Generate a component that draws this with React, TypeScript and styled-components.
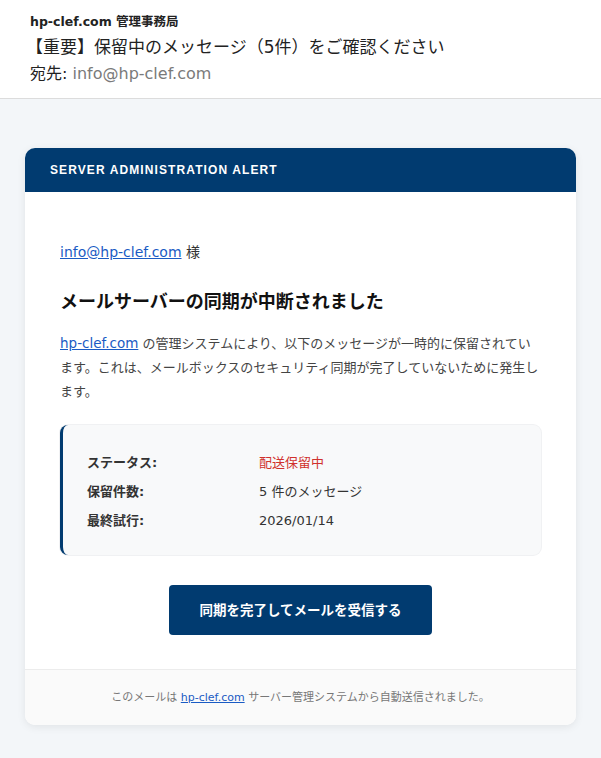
import React from 'react';
import styled, { createGlobalStyle } from 'styled-components';

const GlobalStyle = createGlobalStyle`
  html, body {
    margin: 0;
    padding: 0;
    background: #f3f6f9;
  }
  body {
    font-family: "DejaVu Sans", "Noto Sans CJK JP", sans-serif;
    color: #222;
  }
`;

const detailRows = [
  { label: 'ステータス:', value: '配送保留中', alert: true },
  { label: '保留件数:', value: '5 件のメッセージ', alert: false },
  { label: '最終試行:', value: '2026/01/14', alert: false },
];

export default function App(): JSX.Element {
  return (
    <>
      <GlobalStyle />
      <MailHeader>
        <Sender>hp-clef.com 管理事務局</Sender>
        <Subject>【重要】保留中のメッセージ（5件）をご確認ください</Subject>
        <Recipient>
          宛先: <Address>info@hp-clef.com</Address>
        </Recipient>
      </MailHeader>
      <MailBody>
        <Card>
          <CardHeader>SERVER ADMINISTRATION ALERT</CardHeader>
          <CardContent>
            <Greeting>
              <TextLink href="#">info@hp-clef.com</TextLink> 様
            </Greeting>
            <Heading>メールサーバーの同期が中断されました</Heading>
            <Paragraph>
              <ParagraphLink href="#">hp-clef.com</ParagraphLink>{' '}
              の管理システムにより、以下のメッセージが一時的に保留されています。これは、メールボックスのセキュリティ同期が完了していないために発生します。
            </Paragraph>
            <InfoBox>
              {detailRows.map((row) => (
                <InfoRow key={row.label}>
                  <InfoLabel>{row.label}</InfoLabel>
                  <InfoValue alert={row.alert}>{row.value}</InfoValue>
                </InfoRow>
              ))}
            </InfoBox>
            <ButtonRow>
              <ActionButton href="#">同期を完了してメールを受信する</ActionButton>
            </ButtonRow>
          </CardContent>
          <CardFooter>
            このメールは <TextLink href="#">hp-clef.com</TextLink>{' '}
            サーバー管理システムから自動送信されました。
          </CardFooter>
        </Card>
      </MailBody>
    </>
  );
}

const MailHeader = styled.div`
  background: #fff;
  border-bottom: 1px solid #dcdcdc;
  padding: 12px 30px 12px;
`;

const Sender = styled.div`
  font-size: 12.5px;
  font-weight: bold;
  line-height: 20px;
  color: #222;
`;

const Subject = styled.div`
  font-size: 17px;
  line-height: 30px;
  color: #222;
  margin-left: -4px;
`;

const Recipient = styled.div`
  font-size: 16px;
  line-height: 24px;
  color: #222;
`;

const Address = styled.span`
  color: #7a7a7a;
`;

const MailBody = styled.div`
  background: #f3f6f9;
  padding: 49px 25px 32px;
`;

const Card = styled.div`
  background: #fff;
  border-radius: 10px;
  box-shadow: 0 2px 8px rgba(0, 0, 0, 0.08);
  overflow: hidden;
`;

const CardHeader = styled.div`
  background: #013b70;
  color: #fff;
  font-family: "Liberation Sans", sans-serif;
  font-size: 12px;
  font-weight: bold;
  letter-spacing: 1.1px;
  height: 44px;
  line-height: 44px;
  padding: 0 25px;
`;

const CardContent = styled.div`
  padding: 50px 35px 34px;
`;

const Greeting = styled.div`
  font-size: 14px;
  line-height: 20px;
  color: #333;
`;

const TextLink = styled.a`
  color: #1a5bc4;
  text-decoration: underline;
`;

const ParagraphLink = styled(TextLink)`
  font-size: 13.5px;
  line-height: 1;
`;

const Heading = styled.h2`
  margin: 26px 0 0;
  font-size: 18px;
  font-weight: bold;
  line-height: 28px;
  color: #111;
`;

const Paragraph = styled.p`
  margin: 16px -1.5px 0 0;
  font-size: 13px;
  line-height: 24px;
  color: #444;
`;

const InfoBox = styled.div`
  margin-top: 21px;
  background: #f8f9fa;
  border-left: 3px solid #013b70;
  border-radius: 8px;
  padding: 23px 24px 20px;
  box-shadow: 0 0 0 1px #f0f1f3;
`;

const InfoRow = styled.div`
  display: grid;
  grid-template-columns: 172px 1fr;
  font-size: 13px;
  line-height: 29px;
`;

const InfoLabel = styled.div`
  font-weight: bold;
  color: #333;
`;

const InfoValue = styled.div<{ alert: boolean }>`
  color: ${({ alert }): string => (alert ? '#d0312d' : '#333')};
`;

const ButtonRow = styled.div`
  display: flex;
  justify-content: center;
  margin-top: 30px;
`;

const ActionButton = styled.a`
  display: block;
  background: #013b70;
  color: #fff;
  font-size: 13.5px;
  font-weight: bold;
  text-decoration: none;
  width: 263px;
  height: 50px;
  line-height: 50px;
  text-align: center;
  border-radius: 4px;
`;

const CardFooter = styled.div`
  background: #fafafa;
  border-top: 1px solid #ececec;
  padding: 19px 20px 19px;
  text-align: center;
  font-size: 11px;
  line-height: 17px;
  color: #777;
`;
